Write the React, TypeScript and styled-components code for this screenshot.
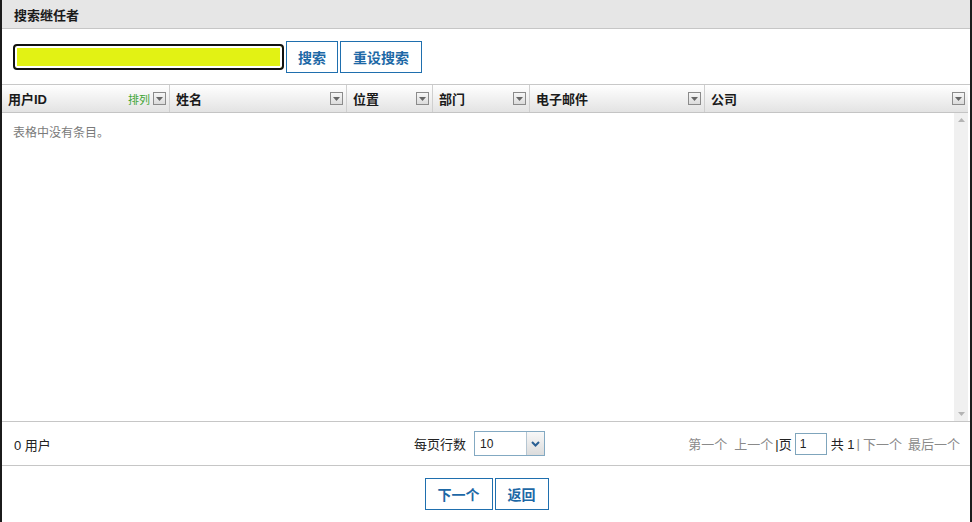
import React from "react";
import styled, { createGlobalStyle } from "styled-components";

const Global = createGlobalStyle`
  html, body { margin: 0; padding: 0; background: #fff; }
  body { font-family: "Liberation Sans", Arial, "Noto Sans CJK SC", sans-serif; font-size: 13px; color: #222; }
  * { box-sizing: border-box; }
`;

const Frame = styled.div`
  width: 972px;
  height: 522px;
  border-left: 2px solid #1b1b1b;
  border-right: 2px solid #1b1b1b;
  display: flex;
  flex-direction: column;
  overflow: hidden;
`;

const TitleBar = styled.div`
  height: 29px;
  background: #e6e6e6;
  border-bottom: 1px solid #c6c6c6;
  padding-left: 12px;
  display: flex;
  align-items: center;
  font-weight: bold;
  font-size: 13px;
  color: #1a1a1a;
`;

const SearchRow = styled.div`
  height: 55px;
  display: flex;
  align-items: center;
  padding-left: 11px;
  gap: 2px;
`;

const SearchInput = styled.input`
  width: 271px;
  height: 26px;
  border: 2px solid #111;
  border-radius: 4px;
  background: #e2f214;
  box-shadow: inset 0 0 0 2px #fff, inset 0 0 0 3px #e2f214;
  padding: 0 6px;
  outline: none;
`;

const BlueButton = styled.button<{ $pad?: number }>`
  height: 32px;
  padding: 0 ${(p) => p.$pad ?? 11}px;
  background: #fff;
  border: 1px solid #1f6fae;
  color: #1d68a6;
  font-family: "Liberation Sans", Arial, "Noto Sans CJK SC", sans-serif;
  font-weight: bold;
  font-size: 14px;
  cursor: pointer;
`;

const Table = styled.div`
  flex: 1;
  display: flex;
  flex-direction: column;
  border-top: 1px solid #c8c8c8;
`;

const HeaderRow = styled.div`
  height: 28px;
  display: flex;
  background: linear-gradient(#ffffff, #e3e3e3);
  border-bottom: 1px solid #c4c4c4;
  margin-right: 2px;
`;

const HeaderCell = styled.div<{ $w?: number }>`
  ${(p) => (p.$w ? `width: ${p.$w}px;` : "flex: 1;")}
  display: flex;
  align-items: center;
  padding: 0 3px 0 6px;
  border-right: ${(p) => (p.$w ? "1px solid #cfcfcf" : "none")};
  font-weight: bold;
  font-size: 13px;
  color: #1a1a1a;
`;

const HeaderLabel = styled.span`
  flex: 1;
`;

const SortTag = styled.span`
  color: #3ea535;
  font-size: 11px;
  font-weight: normal;
  margin-right: 3px;
`;

const MenuBox = styled.span`
  width: 13px;
  height: 13px;
  border: 1px solid #8b8b8b;
  background: linear-gradient(#f6f6f6, #dcdcdc);
  display: flex;
  align-items: center;
  justify-content: center;
`;

const Body = styled.div`
  height: 309px;
  display: flex;
  border-bottom: 1px solid #c6c6c6;
`;

const EmptyText = styled.div`
  flex: 1;
  padding: 10px 0 0 11px;
  color: #7a7a7a;
  font-size: 12px;
`;

const ScrollTrack = styled.div`
  width: 14px;
  margin-right: 2px;
  background: #f0f0f0;
  display: flex;
  flex-direction: column;
  justify-content: space-between;
  align-items: center;
  padding: 5px 0 5px;
`;

const Footer = styled.div`
  height: 44px;
  display: flex;
  align-items: center;
  border-bottom: 1px solid #c6c6c6;
  padding: 0 10px 0 12px;
`;

const Count = styled.div`
  width: 400px;
  padding-top: 1px;
`;

const PerPage = styled.div`
  display: flex;
  align-items: center;
  gap: 8px;
  flex: 1;
`;

const Select = styled.div`
  width: 71px;
  height: 25px;
  border: 1px solid #83a9c2;
  display: flex;
`;

const SelectValue = styled.div`
  flex: 1;
  padding-left: 5px;
  display: flex;
  align-items: center;
  font-size: 12px;
`;

const SelectArrow = styled.div`
  width: 18px;
  border-left: 1px solid #b5c6d2;
  background: linear-gradient(#f8f8f8, #dcdcdc);
  display: flex;
  align-items: center;
  justify-content: center;
`;

const Pager = styled.div`
  display: flex;
  align-items: center;
  color: #8a8a8a;
  white-space: pre;
`;

const PagerLink = styled.span<{ $ml?: number }>`
  margin-left: ${(p) => p.$ml ?? 0}px;
`;

const Dark = styled.span<{ $ml?: number }>`
  color: #222;
  margin-left: ${(p) => p.$ml ?? 0}px;
`;

const PageInput = styled.input`
  width: 32px;
  height: 22px;
  border: 1px solid #7fa5bc;
  margin: 0 4px 0 3px;
  padding: 0 4px;
  font-family: inherit;
  font-size: 12px;
  color: #222;
`;

const Actions = styled.div`
  flex: 1;
  display: flex;
  justify-content: center;
  align-items: flex-start;
  padding: 12px 0 0 0;
  gap: 2px;
  margin-left: 1px;
`;

const Tri = ({ up, color = "#555" }: { up?: boolean; color?: string }) => (
  <svg width="7" height="4" viewBox="0 0 7 4">
    <polygon points={up ? "0,4 7,4 3.5,0" : "0,0 7,0 3.5,4"} fill={color} />
  </svg>
);

const cols: { label: string; w?: number; sort?: boolean }[] = [
  { label: "用户ID", w: 168, sort: true },
  { label: "姓名", w: 177 },
  { label: "位置", w: 86 },
  { label: "部门", w: 97 },
  { label: "电子邮件", w: 175 },
  { label: "公司" },
];

export default function App() {
  return (
    <>
      <Global />
      <Frame>
        <TitleBar>搜索继任者</TitleBar>
        <SearchRow>
          <SearchInput />
          <BlueButton $pad={11}>搜索</BlueButton>
          <BlueButton $pad={12}>重设搜索</BlueButton>
        </SearchRow>
        <Table>
          <HeaderRow>
            {cols.map((c) => (
              <HeaderCell key={c.label} $w={c.w}>
                <HeaderLabel>{c.label}</HeaderLabel>
                {c.sort && <SortTag>排列</SortTag>}
                <MenuBox>
                  <Tri color="#666" />
                </MenuBox>
              </HeaderCell>
            ))}
          </HeaderRow>
          <Body>
            <EmptyText>表格中没有条目。</EmptyText>
            <ScrollTrack>
              <Tri up color="#b4b4b4" />
              <Tri color="#b4b4b4" />
            </ScrollTrack>
          </Body>
          <Footer>
            <Count>0 用户</Count>
            <PerPage>
              <span>每页行数</span>
              <Select>
                <SelectValue>10</SelectValue>
                <SelectArrow>
                  <svg width="9" height="6" viewBox="0 0 9 6">
                    <polyline points="1,1 4.5,4.5 8,1" fill="none" stroke="#2a5f93" strokeWidth="2" />
                  </svg>
                </SelectArrow>
              </Select>
            </PerPage>
            <Pager>
              <PagerLink>第一个</PagerLink>
              <PagerLink $ml={7}>上一个</PagerLink>
              <Dark $ml={2}>|页</Dark>
              <PageInput defaultValue="1" />
              <Dark>共 1</Dark>
              <PagerLink $ml={2}>|</PagerLink>
              <PagerLink $ml={3}>下一个</PagerLink>
              <PagerLink $ml={6}>最后一个</PagerLink>
            </Pager>
          </Footer>
          <Actions>
            <BlueButton $pad={12}>下一个</BlueButton>
            <BlueButton $pad={12}>返回</BlueButton>
          </Actions>
        </Table>
      </Frame>
    </>
  );
}
